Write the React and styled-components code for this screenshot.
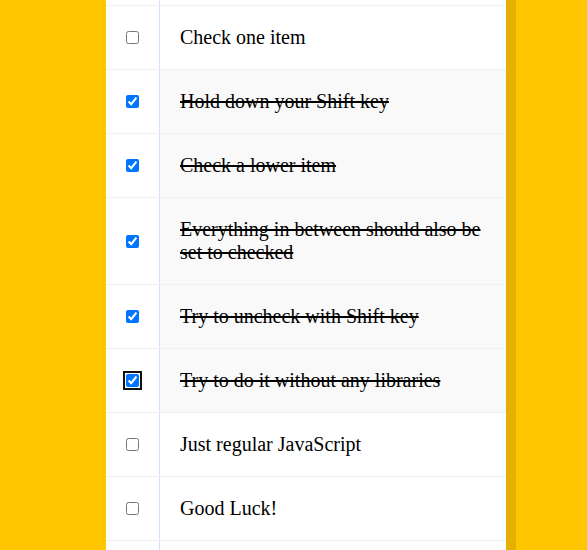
import React from "react";
import styled, { createGlobalStyle } from "styled-components";

const Global = createGlobalStyle`
  html {
    background: #ffc600;
    font-family: "Liberation Sans", Arial, sans-serif;
  }
  body {
    margin: 0;
  }
`;

const Inbox = styled.div`
  width: 400px;
  margin: -58px 0 50px 106px;
  background: #ffffff;
  border-radius: 5px;
  box-shadow: 10px 10px 0 rgba(0, 0, 0, 0.1);
`;

const Item = styled.div`
  display: flex;
  align-items: center;
  border-bottom: 1px solid #f1f1f1;
  &:last-child {
    border-bottom: 0;
  }
`;

const Check = styled.input`
  margin: 20px;
  width: 13px;
  height: 13px;
  flex: none;
  ${(p) =>
    p.$focused &&
    `
    outline: 2px solid #101010;
    outline-offset: 1px;
    box-shadow: 0 0 0 1px #ffffff;
    border-radius: 2px;
  `}
`;

const Text = styled.p`
  margin: 0;
  padding: 20px;
  flex: 1;
  font-family: "Liberation Serif", "Times New Roman", serif;
  font-size: 20px;
  font-weight: 200;
  color: #000;
  border-left: 1px solid #d1e2ff;
  background: ${(p) => (p.$checked ? "#f9f9f9" : "transparent")};
  text-decoration: ${(p) => (p.$checked ? "line-through" : "none")};
`;

const items = [
  { text: "This is an inbox layout.", checked: false },
  { text: "Check one item", checked: false },
  { text: "Hold down your Shift key", checked: true },
  { text: "Check a lower item", checked: true },
  { text: "Everything in between should also be set to checked", checked: true },
  { text: "Try to uncheck with Shift key", checked: true },
  { text: "Try to do it without any libraries", checked: true, focused: true },
  { text: "Just regular JavaScript", checked: false },
  { text: "Good Luck!", checked: false },
  { text: "Don't forget to tweet your result!", checked: false },
];

export default function App() {
  return (
    <>
      <Global />
      <Inbox>
        {items.map((it, i) => (
          <Item key={i}>
            <Check
              type="checkbox"
              defaultChecked={it.checked}
              $focused={it.focused}
            />
            <Text $checked={it.checked}>{it.text}</Text>
          </Item>
        ))}
      </Inbox>
    </>
  );
}
